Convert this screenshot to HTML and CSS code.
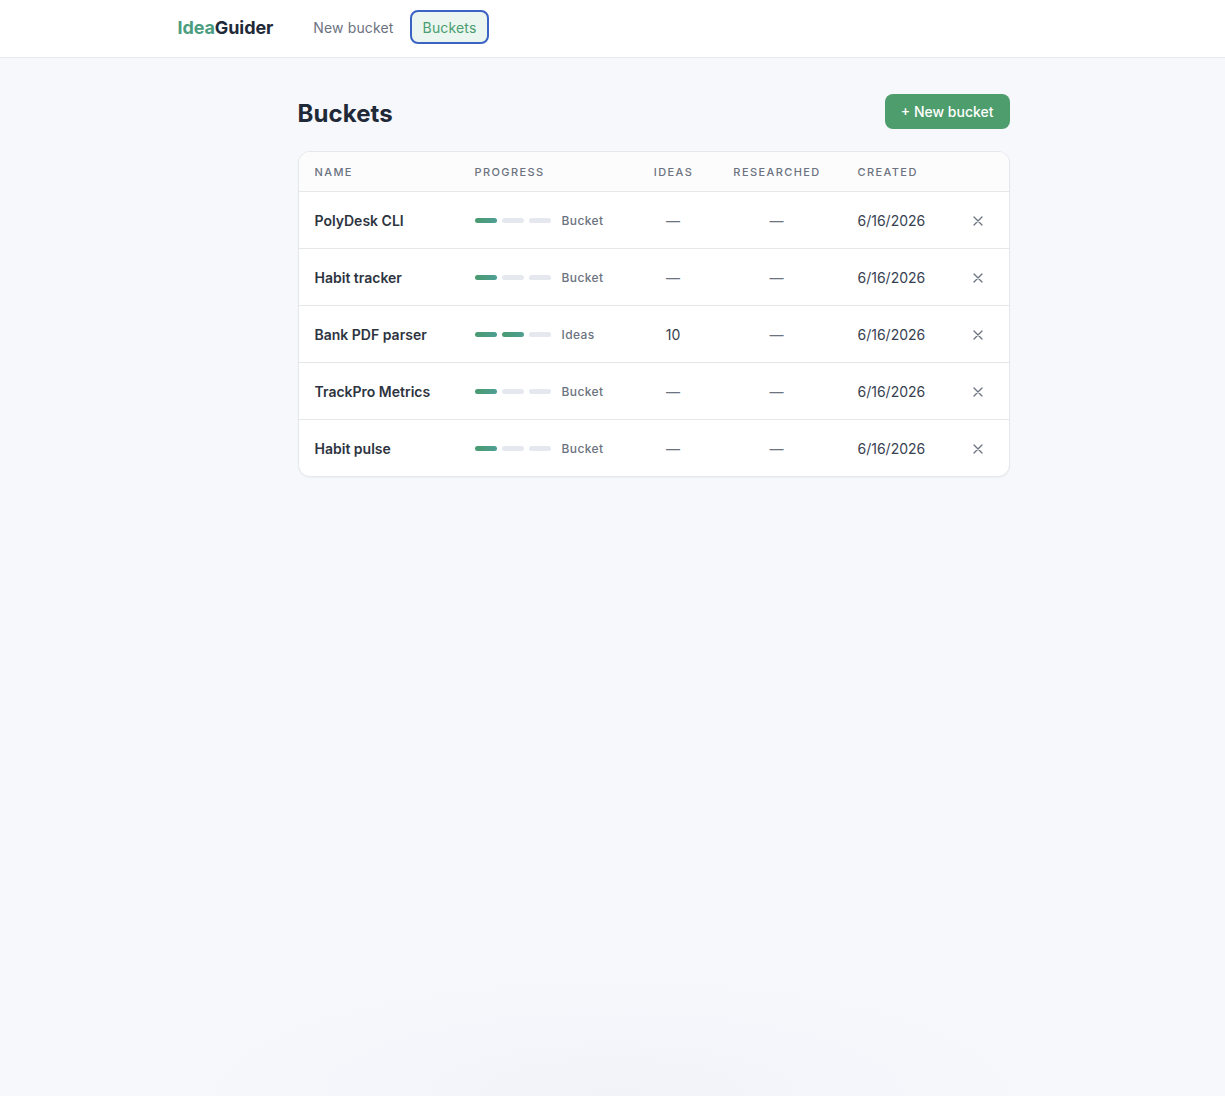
FILE: index.html
```html
<!DOCTYPE html>
<html lang="en">
<head>
    <meta charset="UTF-8">
    <meta name="viewport" content="width=device-width, initial-scale=1.0">
    <title>IdeaGuider - Buckets</title>
    <link rel="stylesheet" href="styles.css">
</head>
<body>
    <header class="topbar">
        <div class="topbar-inner">
            <a class="logo" href="#"><span class="logo-accent">Idea</span>Guider</a>
            <nav class="nav">
                <a class="nav-link" href="#">New bucket</a>
                <a class="nav-link active" href="#">Buckets</a>
            </nav>
        </div>
    </header>

    <div class="page">
        <main class="content">
            <div class="page-head">
                <h1>Buckets</h1>
                <button type="button" class="btn-primary">+ New bucket</button>
            </div>

            <div class="card">
                <div class="row row-head">
                    <div class="cell">Name</div>
                    <div class="cell">Progress</div>
                    <div class="cell center">Ideas</div>
                    <div class="cell center">Researched</div>
                    <div class="cell date">Created</div>
                    <div class="cell"></div>
                </div>

                <div class="row">
                    <div class="cell name">PolyDesk CLI</div>
                    <div class="cell">
                        <div class="progress">
                            <span class="step done"></span><span class="step"></span><span class="step"></span>
                            <span class="stage">Bucket</span>
                        </div>
                    </div>
                    <div class="cell center muted">—</div>
                    <div class="cell center muted">—</div>
                    <div class="cell date">6/16/2026</div>
                    <div class="cell action">
                        <button type="button" class="remove" title="Delete">
                            <svg width="10" height="10" viewBox="0 0 10 10"><path d="M1 1l8 8M9 1l-8 8"/></svg>
                        </button>
                    </div>
                </div>

                <div class="row">
                    <div class="cell name">Habit tracker</div>
                    <div class="cell">
                        <div class="progress">
                            <span class="step done"></span><span class="step"></span><span class="step"></span>
                            <span class="stage">Bucket</span>
                        </div>
                    </div>
                    <div class="cell center muted">—</div>
                    <div class="cell center muted">—</div>
                    <div class="cell date">6/16/2026</div>
                    <div class="cell action">
                        <button type="button" class="remove" title="Delete">
                            <svg width="10" height="10" viewBox="0 0 10 10"><path d="M1 1l8 8M9 1l-8 8"/></svg>
                        </button>
                    </div>
                </div>

                <div class="row">
                    <div class="cell name">Bank PDF parser</div>
                    <div class="cell">
                        <div class="progress">
                            <span class="step done"></span><span class="step done"></span><span class="step"></span>
                            <span class="stage">Ideas</span>
                        </div>
                    </div>
                    <div class="cell center">10</div>
                    <div class="cell center muted">—</div>
                    <div class="cell date">6/16/2026</div>
                    <div class="cell action">
                        <button type="button" class="remove" title="Delete">
                            <svg width="10" height="10" viewBox="0 0 10 10"><path d="M1 1l8 8M9 1l-8 8"/></svg>
                        </button>
                    </div>
                </div>

                <div class="row">
                    <div class="cell name">TrackPro Metrics</div>
                    <div class="cell">
                        <div class="progress">
                            <span class="step done"></span><span class="step"></span><span class="step"></span>
                            <span class="stage">Bucket</span>
                        </div>
                    </div>
                    <div class="cell center muted">—</div>
                    <div class="cell center muted">—</div>
                    <div class="cell date">6/16/2026</div>
                    <div class="cell action">
                        <button type="button" class="remove" title="Delete">
                            <svg width="10" height="10" viewBox="0 0 10 10"><path d="M1 1l8 8M9 1l-8 8"/></svg>
                        </button>
                    </div>
                </div>

                <div class="row">
                    <div class="cell name">Habit pulse</div>
                    <div class="cell">
                        <div class="progress">
                            <span class="step done"></span><span class="step"></span><span class="step"></span>
                            <span class="stage">Bucket</span>
                        </div>
                    </div>
                    <div class="cell center muted">—</div>
                    <div class="cell center muted">—</div>
                    <div class="cell date">6/16/2026</div>
                    <div class="cell action">
                        <button type="button" class="remove" title="Delete">
                            <svg width="10" height="10" viewBox="0 0 10 10"><path d="M1 1l8 8M9 1l-8 8"/></svg>
                        </button>
                    </div>
                </div>
            </div>
        </main>
    </div>
</body>
</html>
```

FILE: styles.css
```css
* {
    box-sizing: border-box;
}

body {
    margin: 0;
    min-height: 100vh;
    font-family: Inter, "Noto Sans", Arial, sans-serif;
    color: #1f2937;
    background-color: #f7f8fc;
    background-image: radial-gradient(ellipse 420px 120px at 50% 100%, #f2f3f9, rgba(247, 248, 252, 0));
}

a {
    text-decoration: none;
}

/* top navigation */
.topbar {
    height: 58px;
    background-color: #fff;
    border-bottom: 1px solid #e6e8ef;
}

.topbar-inner {
    width: 870px;
    height: 100%;
    margin: 0 auto;
    padding-bottom: 3px;
    display: flex;
    align-items: center;
    gap: 38px;
}

.logo {
    font-size: 18px;
    font-weight: 700;
    letter-spacing: -0.1px;
    color: #1f2937;
}

.logo-accent {
    color: #4a9d7f;
}

.nav {
    display: flex;
    align-items: center;
    gap: 14px;
}

.nav-link {
    height: 34px;
    display: flex;
    align-items: center;
    font-size: 14px;
    letter-spacing: 0.15px;
    color: #6b7280;
    padding: 0;
    border: 2px solid transparent;
    border-radius: 8px;
}

.nav-link.active {
    padding: 0 11px;
    color: #4a9d6f;
    background-color: #eaf6ef;
    border-color: #3b63c4;
}

/* page body */
.page {
    width: 870px;
    margin: 0 auto;
}

.content {
    width: 712px;
    margin-left: 120px;
    padding-top: 36px;
}

.page-head {
    display: flex;
    align-items: center;
    justify-content: space-between;
    margin-bottom: 22px;
}

h1 {
    margin: 0;
    padding-top: 3px;
    font-size: 24px;
    font-weight: 700;
    letter-spacing: 0.1px;
    color: #1f2937;
}

.btn-primary {
    height: 35px;
    padding: 0 16px;
    border: none;
    border-radius: 8px;
    background-color: #4e9d6d;
    color: #fff;
    font-family: inherit;
    font-size: 14px;
    font-weight: 500;
    cursor: pointer;
}

/* bucket table */
.card {
    background-color: #fff;
    border: 1px solid #e5e7eb;
    border-radius: 12px;
    box-shadow: 0 1px 2px rgba(16, 24, 40, 0.04);
    overflow: hidden;
}

.row {
    display: grid;
    grid-template-columns: 160px 179px 71px 136px 1fr 64px;
    align-items: center;
    height: 57px;
    padding-top: 1px;
    border-top: 1px solid #e5e7eb;
    font-size: 14px;
    color: #374151;
}

.row-head {
    height: 39px;
    padding-top: 0;
    border-top: none;
    background-color: #fcfcfd;
    font-size: 11px;
    font-weight: 500;
    letter-spacing: 1.4px;
    text-transform: uppercase;
    color: #6b7280;
}

.cell {
    padding-left: 16px;
}

.cell.center {
    padding-left: 0;
    text-align: center;
}

.cell.date {
    padding-left: 13px;
}

.row-head .cell.center {
    padding-left: 1px;
}

.name {
    font-weight: 600;
    color: #2d3440;
}

.muted {
    color: #6b7280;
}

.progress {
    display: flex;
    align-items: center;
    gap: 5px;
}

.step {
    width: 22px;
    height: 5px;
    border-radius: 3px;
    background-color: #e6e8ef;
}

.step.done {
    background: linear-gradient(90deg, #4a9a70, #4e9f94);
}

.stage {
    margin-left: 6px;
    font-size: 12px;
    font-weight: 500;
    letter-spacing: 0.4px;
    color: #6b7280;
}

.action {
    padding-left: 0;
    padding-right: 16px;
    display: flex;
    justify-content: flex-end;
}

.remove {
    display: flex;
    width: 30px;
    height: 24px;
    align-items: center;
    justify-content: center;
    border: none;
    background: none;
    padding: 0;
    cursor: pointer;
}

.remove svg {
    stroke: #6b7280;
    stroke-width: 1.3;
    stroke-linecap: round;
}
```
